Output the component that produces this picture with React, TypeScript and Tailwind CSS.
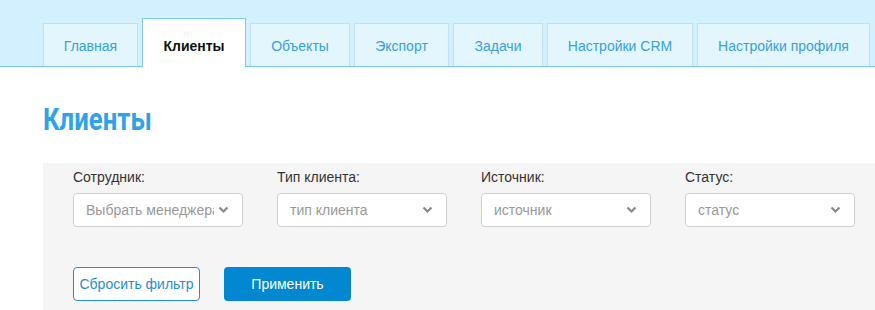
const tabs = [
  { label: 'Главная', w: 'w-[95px]' },
  { label: 'Клиенты', w: 'w-[104px]', active: true },
  { label: 'Объекты', w: 'w-[100px]' },
  { label: 'Экспорт', w: 'w-[95px]' },
  { label: 'Задачи', w: 'w-[90px]' },
  { label: 'Настройки CRM', w: 'w-[146px]' },
  { label: 'Настройки профиля', w: 'w-[173px]' },
]

const filters = [
  { label: 'Сотрудник:', placeholder: 'Выбрать менеджера' },
  { label: 'Тип клиента:', placeholder: 'тип клиента' },
  { label: 'Источник:', placeholder: 'источник' },
  { label: 'Статус:', placeholder: 'статус' },
]

function Chevron() {
  return (
    <svg width="11" height="8" viewBox="0 0 11 8" className="shrink-0">
      <polyline points="1.5,1.5 5.5,5.5 9.5,1.5" fill="none" stroke="#8a8a8a" strokeWidth="2.2" />
    </svg>
  )
}

export default function App() {
  return (
    <div className="h-[310px] w-[875px] overflow-hidden bg-white font-['Liberation_Sans',Arial,sans-serif] text-[14px]">
      <div className="flex h-[67px] items-end gap-[4px] border-b border-[#7cc6ef] bg-[#d3f0fe] pl-[43px]">
        {tabs.map((t) =>
          t.active ? (
            <div
              key={t.label}
              className={`${t.w} relative -mb-px flex h-[49px] shrink-0 justify-center border border-b-0 border-[#7fcdf5] bg-white pt-[17px] leading-5 font-bold text-[#111]`}
            >
              {t.label}
            </div>
          ) : (
            <div
              key={t.label}
              className={`${t.w} flex h-[43px] shrink-0 justify-center border border-b-0 border-[#c3e0ee] bg-[#e3f6fe] pt-[12px] leading-5 text-[#3a9fe0]`}
            >
              {t.label}
            </div>
          ),
        )}
      </div>

      <div className="mt-[35px] flex h-9 pl-[43px]">
        <h1 className="origin-left scale-x-[0.83] font-['Roboto',sans-serif] text-[31px] leading-9 font-bold text-[#2ea3e8]">
          Клиенты
        </h1>
      </div>

      <div className="mt-[25px] ml-[43px] bg-[#f5f5f5] pt-[4px] pb-[20px] pl-[30px]">
        <div className="flex gap-[34px]">
          {filters.map((f) => (
            <div key={f.label} className="flex w-[170px] flex-col gap-[6px]">
              <span className="leading-5 text-[#333]">{f.label}</span>
              <div className="flex h-[34px] items-center gap-1 rounded-[4px] border border-[#cfcfcf] bg-white pr-[13px] pl-[12px]">
                <span className="flex-1 overflow-hidden whitespace-nowrap text-[#999]">{f.placeholder}</span>
                <Chevron />
              </div>
            </div>
          ))}
        </div>
        <div className="mt-[40px] flex gap-[24px]">
          <button className="h-[34px] w-[127px] rounded-[4px] border border-[#1f8dd6] bg-white text-[#1f8dd6]">
            Сбросить фильтр
          </button>
          <button className="h-[34px] w-[127px] rounded-[4px] bg-[#0288d1] text-white">Применить</button>
        </div>
      </div>
    </div>
  )
}
